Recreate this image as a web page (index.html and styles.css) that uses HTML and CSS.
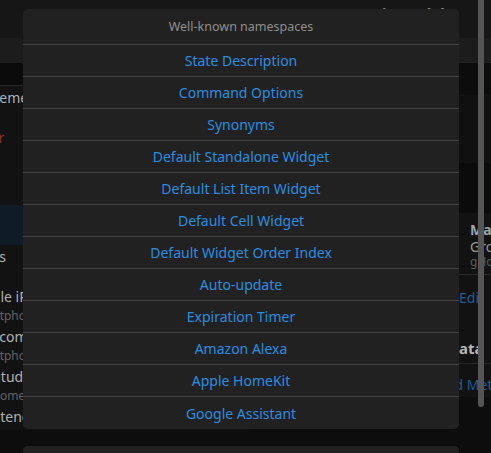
FILE: index.html
```html
<!DOCTYPE html>
<html lang="en">
<head>
    <meta charset="UTF-8">
    <meta name="viewport" content="width=device-width, initial-scale=1.0">
    <title>Semantic Model</title>
    <link rel="stylesheet" href="styles.css">
</head>
<body>

    <div class="page">
        <!-- Navbar -->
        <div class="navbar">
            <span class="navbar-title">Semantic Model</span>
        </div>
        <div class="subnavbar"></div>

        <div class="main">
            <!-- Model tree -->
            <div class="tree-pane">
                <div class="searchbar"></div>
                <ul class="tree">
                    <li class="tree-item first">Measurement</li>
                    <li class="tree-item error">Error</li>
                    <li class="tree-item spacer"></li>
                    <li class="tree-item selected"></li>
                    <li class="tree-item points">Points</li>
                    <li class="tree-item two-line mobile">Mobile iPhone<small>smartphone</small></li>
                    <li class="tree-item two-line telecom">Telecom<small>smartphone</small></li>
                    <li class="tree-item two-line latitude">Latitude<small>Moment</small></li>
                    <li class="tree-item last">Extend</li>
                </ul>
            </div>

            <!-- Details -->
            <div class="detail-pane">
                <div class="detail-search"></div>
                <div class="detail-gap"></div>
                <div class="detail-head"></div>
                <div class="detail-card">
                    <div class="card-title">Main</div>
                    <div class="card-text">Group</div>
                    <div class="card-sub">gHome</div>
                </div>
                <div class="detail-link edit">Edit</div>
                <div class="detail-title">Metadata</div>
                <div class="detail-link add">Add Metadata</div>
            </div>

            <div class="scrollbar"></div>
        </div>
    </div>

    <!-- Actions sheet -->
    <div class="actions-modal">
        <div class="actions-group">
            <div class="actions-label">Well-known namespaces</div>
            <button class="actions-button">State Description</button>
            <button class="actions-button">Command Options</button>
            <button class="actions-button">Synonyms</button>
            <button class="actions-button">Default Standalone Widget</button>
            <button class="actions-button">Default List Item Widget</button>
            <button class="actions-button">Default Cell Widget</button>
            <button class="actions-button">Default Widget Order Index</button>
            <button class="actions-button">Auto-update</button>
            <button class="actions-button">Expiration Timer</button>
            <button class="actions-button">Amazon Alexa</button>
            <button class="actions-button">Apple HomeKit</button>
            <button class="actions-button">Google Assistant</button>
        </div>
        <div class="actions-group">
            <button class="actions-button">Cancel</button>
        </div>
    </div>

</body>
</html>
```

FILE: styles.css
```css
* {
    margin: 0;
    padding: 0;
    box-sizing: border-box;
}

body {
    font-family: 'Noto Sans', sans-serif;
    background-color: #0d0d0d;
    color: #bdbdbd;
    width: 491px;
    height: 453px;
    overflow: hidden;
    position: relative;
}

/* Page underneath (already dimmed by the backdrop) */
.page {
    height: 100%;
    display: flex;
    flex-direction: column;
}

.navbar {
    height: 38px;
    background-color: #161616;
    padding: 2px 0 0 325px;
    overflow: hidden;
}

.navbar-title {
    display: block;
    font-size: 15px;
    font-weight: bold;
    color: #8a8a8a;
    line-height: 22px;
}

.subnavbar {
    height: 24px;
    background-color: #1c1c1c;
}

.main {
    flex: 1;
    display: flex;
    position: relative;
}

/* Tree */
.tree-pane {
    flex: 0 0 310px;
    margin-left: -60px;
    height: 368px;
    background-color: #121212;
    overflow: hidden;
}

.searchbar {
    height: 24px;
    background-color: #0b0b0b;
    border-top: 1px solid #202020;
    border-bottom: 1px solid #262626;
}

.tree {
    list-style: none;
    font-size: 14px;
}

.tree-item {
    height: 40px;
    line-height: 20px;
    color: #b0b0b0;
    white-space: nowrap;
}

.tree-item.first {
    height: 26px;
    line-height: 24px;
    text-indent: 10px;
    color: #a7b3bc;
}

.tree-item.error {
    height: 52px;
    line-height: 52px;
    text-indent: 31px;
    color: #8b2f22;
}

.tree-item.spacer {
    height: 41px;
}

.tree-item.selected {
    background-color: #0f1c27;
}

.tree-item.points {
    height: 42px;
    line-height: 24px;
    text-indent: 25px;
}

.tree-item small {
    display: block;
    font-size: 12px;
    line-height: 18px;
    color: #626262;
}

.tree-item.mobile {
    text-indent: 27px;
}

.tree-item.telecom {
    text-indent: 33px;
}

.tree-item.latitude {
    text-indent: 37px;
}

.tree-item.mobile small,
.tree-item.telecom small {
    text-indent: 31px;
}

.tree-item.latitude small {
    text-indent: 49px;
}

.tree-item.last {
    height: 23px;
    text-indent: 45px;
}

/* Details */
.detail-pane {
    flex: 1;
    min-width: 0;
    overflow: hidden;
}

.detail-search {
    height: 33px;
    background-color: #0c0c0c;
    border-top: 1px solid #202020;
}

.detail-gap {
    height: 68px;
    background-color: #101010;
}

.detail-head {
    height: 50px;
    background-color: #0b0b0b;
}

.detail-card {
    height: 62px;
    background-color: #121212;
    padding: 8px 0 0 220px;
    border-bottom: 1px solid #2a2a2a;
    font-size: 14px;
    line-height: 17px;
    white-space: nowrap;
}

.card-title {
    font-weight: bold;
    color: #9aa6b0;
}

.card-text {
    color: #9a9a9a;
}

.card-sub {
    font-size: 12px;
    line-height: 14px;
    color: #5c5c5c;
}

.detail-link {
    background-color: #121212;
    color: #1d5e94;
    font-size: 14px;
    white-space: nowrap;
}

.detail-link.edit {
    height: 47px;
    line-height: 46px;
    padding-left: 209px;
}

.detail-title {
    height: 42px;
    line-height: 52px;
    padding-left: 161px;
    background-color: #121212;
    color: #b5b5b5;
    font-weight: bold;
    font-size: 15px;
    white-space: nowrap;
    border-bottom: 1px solid #262626;
}

.detail-link.add {
    height: 33px;
    line-height: 42px;
    padding-left: 187px;
}

.scrollbar {
    position: absolute;
    right: 7px;
    top: -62px;
    width: 6px;
    height: 407px;
    border-radius: 0 0 3px 3px;
    background-color: #555555;
}

/* Actions sheet */
.actions-modal {
    position: absolute;
    left: 23px;
    top: 9px;
    width: 436px;
    display: flex;
    flex-direction: column;
    gap: 17px;
}

.actions-group {
    background-color: #212121;
    border-radius: 5px;
    overflow: hidden;
}

.actions-label {
    height: 36px;
    line-height: 35px;
    text-align: center;
    font-size: 12.5px;
    color: #8e8e8e;
    border-bottom: 1px solid #444444;
}

.actions-button {
    display: block;
    width: 100%;
    height: 32px;
    background: none;
    border: none;
    border-bottom: 1px solid #444444;
    font-family: inherit;
    font-size: 14px;
    color: #2a8ee0;
    text-align: center;
    cursor: pointer;
}

.actions-button:last-child {
    border-bottom: none;
}
```
